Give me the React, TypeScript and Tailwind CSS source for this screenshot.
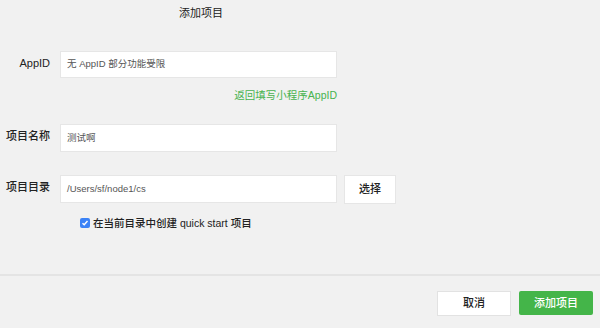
export default function App() {
  const font = { fontFamily: '"Liberation Sans", "Noto Sans CJK SC", sans-serif' };
  return (
    <div className="w-[600px] h-[328px] bg-[#f1f1f1] flex flex-col overflow-hidden text-[#222]" style={font}>
      <div className="w-[402px] text-center text-[11px] leading-[14px] pt-[6px]">添加项目</div>
      <div className="flex flex-col pt-[31px]">
        <div className="flex items-start">
          <div className="w-[50px] text-right text-[11px] leading-[14px] pt-[5px] font-medium">AppID</div>
          <div className="ml-[10px] w-[277px] h-[27px] bg-white border border-[#e6e6e6] flex items-center px-[6px] text-[9.5px] text-[#555]">
            无 AppID 部分功能受限
          </div>
        </div>
        <div className="w-[337px] text-right text-[10.5px] leading-[14px] text-[#47b34f] mt-[10px]">返回填写小程序AppID</div>
        <div className="flex items-start mt-[22px]">
          <div className="w-[50px] text-right text-[11px] leading-[14px] pt-[5px] font-medium">项目名称</div>
          <div className="ml-[10px] w-[277px] h-[28px] bg-white border border-[#e6e6e6] flex items-center px-[6px] text-[9.5px] text-[#555]">
            测试啊
          </div>
        </div>
        <div className="flex items-start mt-[23px]">
          <div className="w-[50px] text-right text-[11px] leading-[14px] pt-[5px] font-medium">项目目录</div>
          <div className="ml-[10px] w-[277px] h-[28px] bg-white border border-[#e6e6e6] flex items-center px-[6px] text-[9.5px] text-[#555]">
            /Users/sf/node1/cs
          </div>
          <div className="ml-[7px] w-[52px] h-[29px] bg-white border border-[#e6e6e6] flex items-center justify-center text-[11px] font-medium">
            选择
          </div>
        </div>
        <div className="flex items-center ml-[80px] mt-[13px] h-[12px]">
          <div className="w-[10px] h-[10px] rounded-[2px] bg-[#3b82f6] flex items-center justify-center">
            <svg width="8" height="8" viewBox="0 0 8 8">
              <path d="M1.5 4.2 L3.2 5.8 L6.5 2" stroke="white" strokeWidth="1.4" fill="none" />
            </svg>
          </div>
          <span className="ml-[3px] text-[10.5px] leading-[12px] font-medium">在当前目录中创建 quick start 项目</span>
        </div>
      </div>
      <div className="mt-[45px] h-[2px] bg-[#e4e4e4]"></div>
      <div className="flex justify-end gap-[8px] pr-[7px] pt-[15px]">
        <div className="w-[74px] h-[25px] bg-white border border-[#e2e2e2] flex items-center justify-center text-[11px] font-medium">取消</div>
        <div className="w-[74px] h-[24px] bg-[#44b549] rounded-[2px] flex items-center justify-center text-[11px] text-white font-medium">添加项目</div>
      </div>
    </div>
  );
}
